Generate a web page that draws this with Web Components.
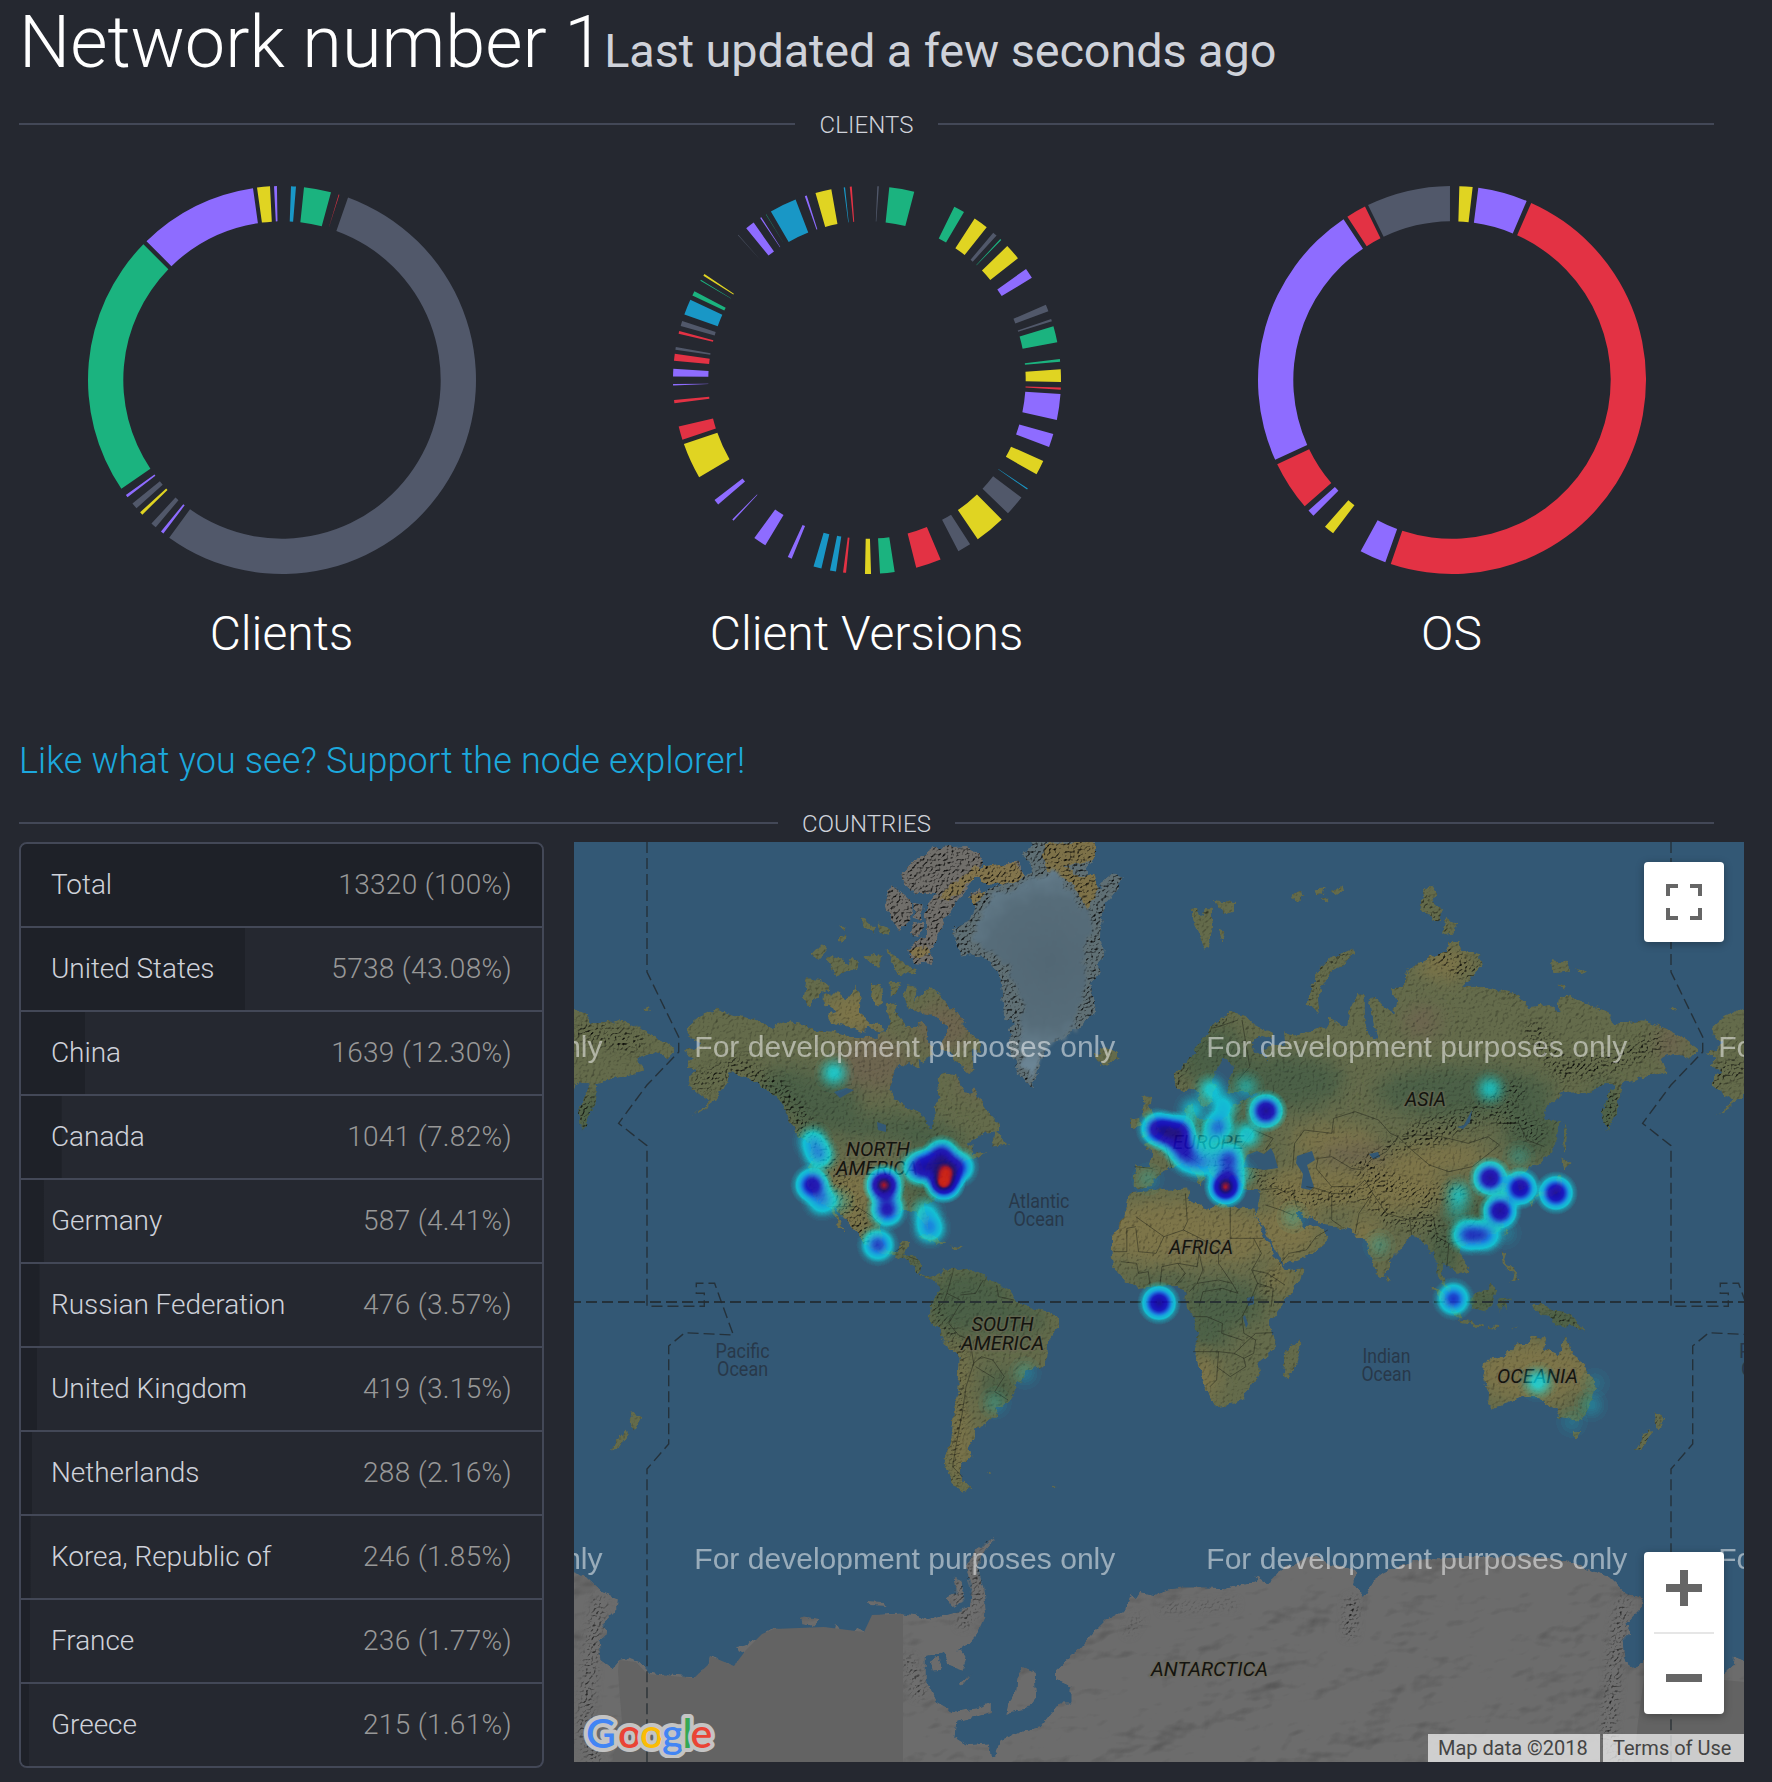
<!DOCTYPE html>
<html lang="en">
<head>
<meta charset="utf-8">
<title>Network number 1</title>
<style>
  body { margin: 0; background: #252830; color: #cfd2da; font-family: Roboto, "Liberation Sans", sans-serif; font-weight: 300; overflow: hidden; }
</style>
</head>
<body>
<explorer-page>
  <page-title slot="title" updated="Last updated a few seconds ago">Network number 1</page-title>
  <section-divider slot="clients">CLIENTS</section-divider>
  <donut-chart slot="charts" kind="clients">Clients</donut-chart>
  <donut-chart slot="charts" kind="versions">Client Versions</donut-chart>
  <donut-chart slot="charts" kind="os">OS</donut-chart>
  <support-link slot="support">Like what you see? Support the node explorer!</support-link>
  <section-divider slot="countries">COUNTRIES</section-divider>
  <country-list slot="list">
    <country-row share="100" value="13320 (100%)">Total</country-row>
    <country-row share="43.08" value="5738 (43.08%)">United States</country-row>
    <country-row share="12.30" value="1639 (12.30%)">China</country-row>
    <country-row share="7.82" value="1041 (7.82%)">Canada</country-row>
    <country-row share="4.41" value="587 (4.41%)">Germany</country-row>
    <country-row share="3.57" value="476 (3.57%)">Russian Federation</country-row>
    <country-row share="3.15" value="419 (3.15%)">United Kingdom</country-row>
    <country-row share="2.16" value="288 (2.16%)">Netherlands</country-row>
    <country-row share="1.85" value="246 (1.85%)">Korea, Republic of</country-row>
    <country-row share="1.77" value="236 (1.77%)">France</country-row>
    <country-row share="1.61" value="215 (1.61%)">Greece</country-row>
  </country-list>
  <node-map slot="map"></node-map>
</explorer-page>

<template id="map-template">
<style>
  :host { display: block; position: relative; width: 1170px; height: 920px; overflow: hidden; background: #335875; }
  svg.world { display: block; }
  .land-label { font: italic 400 20px Roboto, sans-serif; fill: #14140f; text-anchor: middle; stroke: rgba(110,105,85,.5); stroke-width: 3px; paint-order: stroke; stroke-linejoin: round; }
  .sea-label { font: 400 19.5px Roboto, sans-serif; fill: #28384a; text-anchor: middle; }
  .edge-label { font: 400 19.5px Roboto, sans-serif; fill: #28384a; }
  .dev { font: 400 30px "Liberation Sans", Arial, sans-serif; fill: #fff; fill-opacity: .5; }
  .controls { position: absolute; right: 20px; top: 20px; bottom: 48px; display: flex; flex-direction: column; justify-content: space-between; }
  .box { background: #fff; border-radius: 4px; width: 80px; box-shadow: 0 2px 8px rgba(0,0,0,.3); display: flex; flex-direction: column; align-items: center; }
  .box svg { display: block; }
  .box hr { width: 60px; height: 2px; border: 0; margin: 0; background: #e6e6e6; }
  .legal { position: absolute; right: 0; bottom: 0; display: flex; gap: 3px; font: 400 20px/28px Roboto, sans-serif; color: #444; }
  .legal span { box-sizing: border-box; background: rgba(245,245,245,.72); padding-left: 10px; white-space: nowrap; }
  .legal span:first-child { width: 172px; }
  .legal span:last-child { width: 141px; }
  .logo { position: absolute; left: 8px; bottom: 4px; }
  .logo text { font: 600 41px Lato, "Open Sans", sans-serif; }
</style>
<svg class="world" width="1170" height="920" viewBox="0 0 1170 920">
  <defs>
    <filter id="plain" filterUnits="userSpaceOnUse" x="0" y="-20" width="1210" height="980" color-interpolation-filters="sRGB">
      <feTurbulence type="fractalNoise" baseFrequency=".11" numOctaves="4" seed="4" result="n"/>
      <feDisplacementMap in="SourceGraphic" in2="n" scale="8" xChannelSelector="R" yChannelSelector="G" result="d"/>
      <feTurbulence type="fractalNoise" baseFrequency=".3" numOctaves="3" seed="9" result="h"/>
      <feDiffuseLighting in="h" surfaceScale=".8" diffuseConstant="1.34" lighting-color="#fff" result="l"><feDistantLight azimuth="225" elevation="50"/></feDiffuseLighting>
      <feComposite in="d" in2="l" operator="arithmetic" k1="1" result="m"/>
      <feComposite in="m" in2="d" operator="in"/>
    </filter>
    <filter id="rough" filterUnits="userSpaceOnUse" x="0" y="-20" width="1210" height="980" color-interpolation-filters="sRGB">
      <feTurbulence type="fractalNoise" baseFrequency=".11" numOctaves="4" seed="4" result="n"/>
      <feDisplacementMap in="SourceGraphic" in2="n" scale="8" xChannelSelector="R" yChannelSelector="G" result="d"/>
      <feTurbulence type="fractalNoise" baseFrequency=".38" numOctaves="2" seed="12" result="h"/>
      <feDiffuseLighting in="h" surfaceScale="2.6" diffuseConstant="1.5" lighting-color="#fff" result="l"><feDistantLight azimuth="225" elevation="50"/></feDiffuseLighting>
      <feComposite in="d" in2="l" operator="arithmetic" k1="1" result="m"/>
      <feComposite in="m" in2="d" operator="in"/>
    </filter>
    <filter id="ice" filterUnits="userSpaceOnUse" x="0" y="-20" width="1210" height="980" color-interpolation-filters="sRGB">
      <feTurbulence type="fractalNoise" baseFrequency=".11" numOctaves="4" seed="7" result="n"/>
      <feDisplacementMap in="SourceGraphic" in2="n" scale="6" xChannelSelector="R" yChannelSelector="G" result="d"/>
      <feTurbulence type="fractalNoise" baseFrequency=".012 .02" numOctaves="4" seed="3" result="h"/>
      <feDiffuseLighting in="h" surfaceScale="3.4" diffuseConstant="1.34" lighting-color="#fff" result="l"><feDistantLight azimuth="225" elevation="50"/></feDiffuseLighting>
      <feComposite in="d" in2="l" operator="arithmetic" k1="1" result="m"/>
      <feComposite in="m" in2="d" operator="in"/>
    </filter>
    <filter id="frost" x="-10%" y="-10%" width="120%" height="120%" color-interpolation-filters="sRGB">
      <feTurbulence type="fractalNoise" baseFrequency=".09" numOctaves="3" seed="7" result="n"/>
      <feDisplacementMap in="SourceGraphic" in2="n" scale="16" xChannelSelector="R" yChannelSelector="G"/>
      <feGaussianBlur stdDeviation="1.6"/>
    </filter>
    <filter id="soft" x="-50%" y="-50%" width="200%" height="200%"><feGaussianBlur stdDeviation="9"/></filter>
    <filter id="soft2" x="-50%" y="-50%" width="200%" height="200%"><feGaussianBlur stdDeviation="4"/></filter>
    <filter id="heat" filterUnits="userSpaceOnUse" x="0" y="0" width="1170" height="920" color-interpolation-filters="sRGB">
      <feColorMatrix values="0 0 0 1 0  0 0 0 1 0  0 0 0 1 0  0 0 0 1 0"/>
      <feComponentTransfer>
        <feFuncR type="table" tableValues="0 .02 .06 .08 .08 .08 .08 .08 .08 .08 .3 .7 .9 .95"/>
        <feFuncG type="table" tableValues="1 .95 .75 .5 .25 .05 .02 0 0 0 0 .02 .08 .1"/>
        <feFuncB type="table" tableValues="1 1 1 1 .9 .82 .8 .75 .62 .5 .36 .15 .05 .05"/>
        <feFuncA type="table" tableValues="0 .68 .74 .76 .78 .8 .8 .8 .8 .8 .8 .8 .8 .8"/>
      </feComponentTransfer>
    </filter>
    <radialGradient id="spot">
      <stop offset="0" stop-color="#fff" stop-opacity="1"/><stop offset=".2" stop-color="#fff" stop-opacity=".86"/>
      <stop offset=".4" stop-color="#fff" stop-opacity=".54"/><stop offset=".6" stop-color="#fff" stop-opacity=".24"/>
      <stop offset=".8" stop-color="#fff" stop-opacity=".06"/><stop offset="1" stop-color="#fff" stop-opacity="0"/>
    </radialGradient>

    <g id="america">
      <g transform="translate(-4 -2) scale(.38265 .33333)">
        <path d="M305 565 340 528 378 508 420 525 480 540 530 562 560 545 600 550 640 570 690 575 740 590 800 590 830 560 850 520 880 560 905 560 915 540 930 560 935 600 950 640 925 665 905 655 880 665 855 690 836 740 850 775 880 800 915 815 930 850 945 872 955 840 950 800 965 770 960 715 975 700 1010 705 1025 745 1040 765 1055 742 1070 770 1090 815 1120 850 1125 872 1080 880 1040 905 1058 915 1050 945 1070 945 1030 965 1015 990 1010 1005 980 1035 970 1055 945 1085 925 1100 938 1140 935 1162 920 1150 905 1115 870 1110 860 1120 830 1130 812 1155 815 1200 830 1230 850 1235 862 1205 888 1205 882 1235 875 1250 905 1250 918 1275 915 1300 940 1310 965 1305 965 1322 930 1315 905 1295 885 1265 850 1250 815 1240 770 1215 755 1180 730 1150 700 1110 690 1105 705 1140 722 1178 700 1155 685 1120 670 1100 640 1075 620 1040 620 1000 632 960 630 920 600 885 575 850 560 800 540 770 500 745 480 720 450 705 420 700 400 745 385 775 350 805 318 828 345 800 365 780 340 765 310 735 315 705 330 690 305 680 320 655 295 635 325 625 340 610 310 590Z"/>
        <path d="M615 415 650 415 680 440 650 470 625 505 608 470ZM665 460 700 460 725 480 745 435 760 470 758 520 790 550 770 578 725 562 680 547 670 525 700 515 665 490ZM785 435 815 435 815 490 800 500 782 465ZM835 425 865 425 855 465 835 470ZM830 480 850 500 850 560 830 530ZM880 435 905 440 900 480 940 440 970 470 1005 510 1035 560 1070 605 1075 640 1050 630 1055 690 1040 700 1010 670 990 640 965 620 985 590 985 560 950 530 915 520 880 500 870 465ZM880 640 910 650 915 685 885 670ZM1110 870 1125 890 1145 915 1100 920ZM1035 950 1090 935 1060 960ZM905 1185 940 1185 985 1208 960 1212 920 1195ZM990 1213 1025 1218 1010 1230ZM1370 640 1395 625 1430 630 1437 655 1400 680 1380 665ZM630 345 660 310 675 325 650 360ZM668 355 690 345 730 370 740 345 755 385 700 408 680 388ZM700 288 722 286 716 308 700 304ZM705 258 724 256 718 270ZM758 232 775 235 800 265 795 280 765 262ZM768 350 790 338 812 345 812 385 795 380ZM805 250 830 260 832 285 812 280ZM822 330 855 350 875 378 905 382 908 402 865 405 845 370ZM193 506 210 498 218 510ZM780 545 820 560 815 575 790 570Z"/>
      </g>
      <path transform="translate(-4 458) scale(.38265 .33333)" d="M960 -60 975 -90 1015 -97 1050 -88 1090 -70 1120 -45 1150 -30 1170 5 1200 20 1245 30 1278 55 1278 80 1250 120 1248 170 1235 200 1190 215 1175 250 1150 300 1130 322 1108 320 1115 345 1090 370 1060 385 1058 410 1040 435 1050 468 1025 500 1025 535 1052 567 1025 575 1000 550 985 520 978 480 990 440 1000 380 1003 330 1015 260 1018 170 990 140 965 100 938 50 940 20 945 0 965 -25ZM1088 520 1104 518 1098 526ZM1260 556 1270 560 1266 566Z"/>
    </g>
    <g id="eurasia" transform="translate(586 -2) scale(.39031 .33333)">
      <path fill-rule="nonzero" d="M55 755 38 730 35 700 70 670 95 620 130 560 180 515 220 525 240 550 290 580 290 600 250 590 235 600 245 640 272 655 262 630 290 615 322 610 320 575 335 590 365 580 400 570 435 555 430 530 470 560 480 555 485 510 505 462 525 465 525 520 530 560 542 590 560 600 548 560 540 500 545 470 560 475 570 500 600 520 605 480 590 445 625 440 625 405 650 375 690 350 735 335 740 305 765 305 770 330 820 345 825 380 800 410 775 440 830 440 870 450 920 465 945 500 1000 495 1020 510 1025 470 1060 470 1090 490 1150 515 1165 550 1200 548 1240 540 1290 560 1340 595 1380 630 1360 655 1320 640 1285 655 1300 695 1230 715 1185 730 1175 790 1145 875 1132 820 1145 770 1165 730 1140 730 1110 755 1030 760 990 805 985 835 1020 850 1018 900 1000 940 970 978 945 985 925 1005 948 1040 922 1052 905 1015 890 1005 865 1010 862 1030 895 1030 880 1050 895 1080 895 1130 870 1170 840 1195 800 1215 770 1215 765 1240 790 1275 790 1295 765 1305 750 1285 735 1280 725 1270 720 1300 735 1335 750 1362 738 1358 715 1310 700 1240 680 1225 665 1190 640 1195 620 1225 590 1260 575 1312 560 1310 530 1225 525 1195 505 1195 490 1170 460 1160 410 1155 395 1140 355 1115 348 1122 375 1160 405 1157 432 1190 405 1225 365 1255 315 1275 290 1220 260 1160 243 1130 250 1100 258 1050 215 1050 197 1010 180 1008 168 1052 150 1030 125 985 95 975 118 1010 105 1040 85 1000 60 970 30 985 0 1000 -25 1040 -60 1050 -68 1035 -66 978 -25 978 -18 940 -45 915 -10 900 20 870 60 850 70 830 65 795 85 790 90 840 150 840 175 830 180 800 200 790 230 770 260 765 225 760 178 760 172 730 188 680 165 650 150 680 135 720 145 745 130 790 105 800 95 760 75 740Z"/>
      <path d="M-78 1058 0 1050 70 1045 75 1075 130 1110 145 1090 180 1100 240 1105 245 1135 270 1190 290 1240 320 1290 368 1285 360 1320 320 1385 285 1440 285 1470 297 1510 285 1540 250 1575 255 1600 235 1640 195 1690 140 1700 128 1670 105 1600 85 1535 100 1480 85 1430 65 1400 65 1355 30 1335 -20 1340 -55 1345 -90 1320 -120 1280 -125 1240 -118 1180 -95 1130 -85 1095ZM315 1605 320 1535 358 1495 360 1520 340 1600 325 1610Z"/>
      <path d="M-45 768-25 770-28 795-15 830 0 870-5 885-50 890-35 860-40 830ZM-75 835-50 830-48 860-75 868ZM78 210 98 204 105 235 112 205 132 202 140 262 118 334 98 280ZM140 180 190 185 190 215 160 225ZM150 265 168 275 160 308ZM495 325 498 345 440 395 415 440 405 480 410 520 378 495 385 440 410 385 430 360ZM680 150 695 132 710 160 700 190 722 210 722 245 690 225 665 205ZM735 230 762 250 755 275 725 285ZM1000 360 1050 365 1050 395 1005 400ZM1065 380 1095 395 1080 403ZM1020 430 1040 435 1035 450ZM1035 845 1043 880 1040 935 1033 930ZM1030 955 1055 970 1035 990ZM1025 1000 1030 1050 1000 1070 960 1070 980 1055 1010 1040ZM948 1075 963 1075 955 1100ZM885 1165 893 1170 885 1190ZM875 1230 890 1240 885 1265 910 1290 918 1320 900 1330 905 1300 880 1270ZM795 1370 830 1350 850 1330 862 1345 850 1400 835 1415 800 1405ZM695 1340 720 1355 770 1420 775 1440 750 1425ZM770 1440 830 1455 825 1464 775 1450ZM868 1375 905 1372 880 1385 890 1415 875 1400 870 1425ZM955 1395 985 1395 1000 1410 1040 1415 1065 1430 1090 1475 1050 1455 1015 1460 1000 1430 965 1415ZM840 1458 870 1460 868 1468 842 1464ZM898 1468 922 1458 905 1472ZM580 1305 592 1320 584 1330ZM828 1580 835 1560 885 1545 915 1510 945 1508 950 1490 990 1492 985 1525 1015 1545 1030 1530 1035 1483 1050 1515 1060 1550 1090 1575 1110 1615 1115 1650 1095 1720 1065 1742 1025 1735 1015 1710 990 1695 960 1672 930 1672 895 1690 855 1705 838 1695 840 1660 828 1620ZM1055 1770 1078 1770 1070 1792 1060 1790ZM1265 1713 1280 1725 1295 1735 1278 1772 1268 1755ZM1253 1770 1262 1780 1235 1825 1213 1832 1225 1810ZM335 165 362 150 365 165 345 188ZM398 148 425 145 420 162 402 160ZM440 155 460 145 468 135 472 158 452 165ZM408 175 430 172 424 188Z"/>
    </g>
    <path id="greenland" transform="translate(-4 -2) scale(.38265 .33333)" d="M1060 195 1095 145 1160 125 1210 95 1185 40 1220 0 1370 0 1370 60 1350 85 1365 130 1390 150 1385 130 1420 100 1448 110 1430 150 1400 190 1390 240 1385 290 1395 330 1380 400 1360 430 1375 500 1360 540 1320 570 1290 590 1240 625 1225 680 1212 742 1180 720 1165 670 1145 620 1150 570 1165 545 1135 540 1130 480 1125 420 1100 370 1060 345 1025 350 1010 310 1000 265 1045 240Z"/>
    <path id="arctic" transform="translate(-4 -2) scale(.38265 .33333)" d="M865 100 900 60 950 25 1030 18 1070 45 1080 70 1050 100 1050 130 1010 190 975 250 950 320 935 352 880 340 905 300 930 290 930 200 960 160 900 160 870 130ZM840 135 870 165 895 190 890 240 860 272 835 230 825 180ZM1085 90 1130 70 1170 60 1190 110 1130 130 1090 120ZM1040 165 1070 145 1090 190 1060 200ZM885 345 950 345 940 375 900 370ZM898 185 922 190 920 240 895 230ZM900 245 922 250 915 290 890 280Z"/>
    <path id="antarctica" transform="translate(-4 458) scale(.38265 .33333)" d="M196 1115 250 1125 325 1132 362 1095 365 1068 430 1098 455 1060 430 1045 460 1035 500 1005 530 985 600 990 660 980 690 990 692 968 705 995 730 1000 745 985 785 1004 793 945 870 940 900 945 935 960 1000 940 1045 920 1050 870 1035 800 1060 750 1113 712 1085 750 1062 800 1080 860 1088 940 1065 1000 1030 1045 980 1060 930 1072 930 1140 960 1210 1000 1235 1060 1225 1100 1208 1100 1240 1010 1265 1005 1310 1040 1335 1095 1330 1100 1372 1110 1370 1125 1320 1190 1290 1230 1280 1280 1210 1310 1210 1310 1160 1270 1140 1270 1110 1330 1045 1365 1000 1400 960 1450 930 1465 880 1480 895 1490 875 1525 885 1565 868 1600 862 1664 862 1715 865 1797 845 1790 825 1828 855 1843 820 1889 790 1950 765 1981 790 2057 810 2047 850 2072 890 2098 840 2128 815 2205 780 2307 770 2409 770 2511 765 2613 785 2715 830 2756 875 2804 895 2802 920 2761 970 2774 1000 2751 1020 2756 1080 2786 1105 2804 1080 2827 1075 2858 1085 2882 1115 2882 1450 196 1450ZM780 903 820 905 825 918 785 916ZM1005 830 1020 840 1030 900 1000 922 980 895 1010 880ZM940 1085 960 1070 975 1110 945 1112ZM975 1052 1020 1050 1037 1080 1030 1110 990 1095ZM1015 1155 1050 1122 1022 1160ZM1185 1100 1215 1115 1218 1190 1190 1230 1140 1242 1145 1210 1165 1180 1170 1120ZM600 950 650 960 635 978 610 973Z"/>

    <g id="land-shape">
      <use href="#america"/><use href="#america" x="1024"/>
      <use href="#eurasia"/><use href="#eurasia" x="-1024"/>
    </g>
    <mask id="land-mask" maskUnits="userSpaceOnUse" x="-20" y="-20" width="1230" height="980"><use href="#land-shape" fill="#fff"/></mask>

    <g id="terrain">
      <rect x="-20" y="-20" width="1230" height="980" fill="#646b4b"/>
      <g filter="url(#soft)">
        <g fill="#4b6047">
          <ellipse cx="215" cy="245" rx="30" ry="20"/><ellipse cx="250" cy="262" rx="36" ry="30"/><ellipse cx="310" cy="285" rx="60" ry="13"/><ellipse cx="360" cy="300" rx="34" ry="14"/>
          <ellipse cx="355" cy="345" rx="24" ry="22"/><ellipse cx="335" cy="425" rx="18" ry="10"/><ellipse cx="395" cy="460" rx="42" ry="34"/><ellipse cx="445" cy="478" rx="26" ry="18"/>
          <ellipse cx="640" cy="215" rx="34" ry="30"/><ellipse cx="710" cy="240" rx="60" ry="28"/><ellipse cx="650" cy="285" rx="40" ry="16"/><ellipse cx="890" cy="250" rx="90" ry="26"/>
          <ellipse cx="960" cy="290" rx="30" ry="30"/><ellipse cx="1030" cy="270" rx="14" ry="30"/><ellipse cx="900" cy="375" rx="32" ry="22"/><ellipse cx="870" cy="410" rx="18" ry="26"/>
          <ellipse cx="650" cy="462" rx="40" ry="24"/><ellipse cx="590" cy="440" rx="32" ry="7"/><ellipse cx="910" cy="460" rx="40" ry="16"/><ellipse cx="985" cy="478" rx="30" ry="14"/><ellipse cx="630" cy="495" rx="26" ry="14"/>
          <ellipse cx="425" cy="545" rx="20" ry="16"/><ellipse cx="1012" cy="560" rx="8" ry="24"/><ellipse cx="20" cy="285" rx="20" ry="34"/>
        </g>
        <g fill="#7d744a">
          <ellipse cx="595" cy="390" rx="76" ry="32"/><ellipse cx="660" cy="395" rx="30" ry="28"/><ellipse cx="712" cy="390" rx="34" ry="26"/><ellipse cx="705" cy="435" rx="14" ry="14"/>
          <ellipse cx="745" cy="345" rx="56" ry="22"/><ellipse cx="820" cy="345" rx="50" ry="26"/><ellipse cx="865" cy="315" rx="50" ry="14"/><ellipse cx="760" cy="300" rx="44" ry="16"/><ellipse cx="790" cy="392" rx="18" ry="16"/>
          <ellipse cx="628" cy="535" rx="16" ry="26"/><ellipse cx="960" cy="530" rx="60" ry="30"/><ellipse cx="278" cy="345" rx="24" ry="22"/><ellipse cx="280" cy="375" rx="16" ry="22"/><ellipse cx="386" cy="600" rx="12" ry="42"/><ellipse cx="388" cy="535" rx="6" ry="36"/>
          <ellipse cx="280" cy="170" rx="30" ry="20"/><ellipse cx="870" cy="122" rx="26" ry="16"/>
        </g>
        <g fill="#6d654f">
          <ellipse cx="300" cy="220" rx="34" ry="28"/><ellipse cx="370" cy="185" rx="30" ry="24"/><ellipse cx="848" cy="180" rx="18" ry="16"/><ellipse cx="400" cy="240" rx="16" ry="12"/><ellipse cx="780" cy="312" rx="36" ry="10"/><ellipse cx="1096" cy="200" rx="14" ry="18"/>
        </g>
      </g>
    </g>
    <mask id="peaks" maskUnits="userSpaceOnUse" x="-20" y="-20" width="1230" height="980">
      <g filter="url(#soft2)" stroke="#fff" fill="none" stroke-linecap="round">
        <path stroke-width="22" d="M130 240 165 225 200 245 228 275 240 300 262 330 275 365 290 395"/>
        <path stroke-width="9" d="M364 450 362 470 388 505 387 560 380 620 382 640M600 250 612 215 640 180 652 174M440 180 365 130M330 420 350 435"/>
        <path stroke-width="16" d="M675 330 700 345 730 358 790 350 815 375 850 385M785 325 830 300 870 295M850 370 870 400M630 315 650 325"/>
        <path stroke-width="22" d="M800 335 850 355 880 350M845 290 900 275 940 250M960 190 990 230 1040 220 1080 200M925 270 960 290M865 110 895 130M1035 250 1030 280M1040 60 1050 80"/>
        <path stroke-width="9" d="M735 160 745 125 775 108M620 70 640 65M845 50 870 90M975 470 1000 485M895 380 900 385M700 430 690 450M710 505 717 490M1085 565 1065 610M905 120 940 150"/>
        <path stroke-width="22" d="M12 190 60 200M12 280 10 260M1130 240 1165 225"/>
      </g>
    </mask>
    <radialGradient id="gl" gradientUnits="userSpaceOnUse" cx="475" cy="120" r="105"><stop offset="0" stop-color="#526774"/><stop offset=".6" stop-color="#566c79"/><stop offset="1" stop-color="#6b8595"/></radialGradient>
  </defs>

  <g filter="url(#plain)"><g mask="url(#land-mask)"><use href="#terrain"/></g></g>
  <g mask="url(#peaks)"><g filter="url(#rough)"><g mask="url(#land-mask)"><use href="#terrain"/></g></g></g>
  <g filter="url(#rough)"><use href="#arctic" fill="#706e6a"/><path d="M363 56 400 24 408 30 376 58ZM394 30 410 24 440 20 452 36 430 44 410 40ZM395 55 412 48 414 64 404 68ZM335 108 352 104 358 112 340 116Z" fill="#82744c"/></g>
  <g filter="url(#rough)"><use href="#greenland" fill="#5f6f74"/><path d="M470 2 520 0 520 18 490 24 505 36 520 30 524 50 512 66 498 40 470 25Z" fill="#7d7148"/></g>
  <path filter="url(#frost)" fill="url(#gl)" d="M404 88 408 70 418 54 440 48 466 34 478 28 492 44 507 60 516 78 510 120 514 138 502 168 502 186 482 200 468 212 460 236 450 226 446 190 448 160 440 135 430 118 412 108 396 98Z"/>
  <g fill="#335875">
    <path d="M669 325 673 313 683 309 690 312 697 306 700 312 704 326 690 328 680 326ZM723 314 738 309 741 318 733 323 740 345 736 348 727 346 729 332 722 321ZM795 312 804 310 806 315 799 317ZM883 285 890 283 898 268 896 280 889 287ZM260 250 272 246 280 248 266 256ZM303 280 312 283 312 290 304 288ZM342 315 352 308 362 312 355 318 350 330 346 318ZM358 322 374 318 372 322ZM673 456 680 454 680 462 674 464ZM669 475 671 473 674 482 672 486Z"/>
  </g>
  <g transform="translate(586 -2) scale(.39031 .33333)" fill="none" stroke="#1e2018" stroke-opacity=".6" stroke-width="2.2">
    <path d="M-118 1235H-85V1165L-62 1160M-62 1130 10 1190 60 1170 70 1145 65 1060M180 1100V1195H265M60 1170 95 1190 150 1225M-62 1165-55 1235-10 1240 10 1190M-100 1265-60 1270-55 1300-30 1295-25 1340M0 1335 5 1280 45 1270 95 1280 100 1240 95 1190M45 1270 65 1300 40 1335M100 1240 110 1290 95 1330 75 1355M95 1330 150 1320 185 1330 200 1360 160 1345 110 1355 100 1400M150 1225V1270L185 1330M240 1195 260 1240 235 1290 250 1330 230 1385 210 1430M235 1290 275 1300 320 1335M250 1330 290 1345 285 1400M85 1430H120L160 1450 158 1480 210 1500M85 1535H150L190 1540 245 1480 290 1478M150 1535 145 1620 128 1640M145 1580 180 1610 220 1580 215 1555 190 1540M210 1430 215 1480 245 1500 240 1540 215 1555M230 1380H275"/>
    <path d="M258 1050 300 1045 325 1060 340 1050 350 1100M270 1095 310 1110 340 1125M430 1170 400 1190M305 1275 330 1240 375 1230 400 1190M375 1040 400 1045 440 1060 440 1140 465 1160M340 985 345 910 370 870 440 880 445 835 500 815 560 840 590 880 610 890 580 935 540 960 520 990 490 985 440 950 405 955 400 985 440 1040 500 1040M440 1060 490 1060 525 1020 545 1060 510 1120 500 1180M620 890 660 885 720 890 790 910 840 890 870 915 800 980 740 995 690 975 640 925 610 890M545 1060 580 1120 640 1140 700 1130M640 1140 645 1185M700 1130 710 1190 740 1210 780 1200M740 1210 735 1280M870 850 920 850 940 900 985 920M210 540 230 680 200 720M130 565 150 560 200 540M150 840 160 900 210 920 240 870 290 895 270 930M60 850 100 900 60 940 100 970M10 900 30 985M-65 980-20 985"/>
  </g>
  <g transform="translate(-4 458) scale(.38265 .33333)" fill="none" stroke="#1e2018" stroke-opacity=".6" stroke-width="2.2">
    <path d="M1000-80 985-20 1020 0M1020-15 1060-20 1080-60M1115-45 1120-10 1160 0M1018 15 990 70 1015 105 1045 120 1055 190 1075 170 1105 180 1135 230 1110 275 1145 300M1055 190 1035 260 1025 340 1010 430 1000 500 1025 530M1060 200 1110 235M945 35 975 10 985-20M675-280 750-280 790-250 812-225M850-145 870-160M885-130 910-120"/>
  </g>

  <g filter="url(#ice)"><use href="#antarctica" fill="#6c6c6c"/><use href="#antarctica" x="-1024" fill="#6c6c6c"/><use href="#antarctica" x="1024" fill="#6c6c6c"/></g>
  <g mask="url(#pole-peaks)"><g filter="url(#rough)"><use href="#antarctica" fill="#6f6f6f"/><use href="#antarctica" x="-1024" fill="#6f6f6f"/></g></g>
  <path fill="#636363" d="M73 832 120 836 135 822 136 814 160 824 172 808 188 792 200 787 250 785 290 790 298 773 329 772V920H38L48 880 44 830 45 818 62 820Z"/>
  <path fill="#636363" d="M1064 880 1070 836 1084 819 1092 819 1110 834 1170 840V920H1060Z"/>
  <mask id="pole-peaks" maskUnits="userSpaceOnUse" x="-20" y="-20" width="1230" height="980">
    <g filter="url(#soft2)" stroke="#fff" fill="none" stroke-linecap="round" stroke-width="10"><path d="M390 780 405 755 404 738 418 700M335 820 345 850M1050 760 1042 800 1038 850 1034 890 1044 920M26 760 18 800 14 850 10 890 20 920M778 760 776 790M395 700 385 760"/><path stroke-width="5" stroke-opacity=".6" d="M590 766 660 762M565 775 555 790"/></g>
  </mask>

  <g fill="none" stroke="#222a30" stroke-opacity=".85">
    <path d="M0 460H1170" stroke-width="2" stroke-dasharray="11 5" stroke-dashoffset="4"/>
    <g id="dateline" stroke-width="1.4" stroke-dasharray="11 5">
      <path d="M73 0V130L104.700 195V210L73 243 44.600 281.300 73 303.700V464.300H130.300V451.300H122.300V441.300H140.600L159.400 493 110.800 490.700 94.700 504V602L73 627V920"/>
    </g>
    <use href="#dateline" x="1024"/>
  </g>

  <g class="labels"></g>
  <g class="heat" filter="url(#heat)"></g>
  <g class="notes"></g>
</svg>
<div class="controls">
  <div class="box">
    <svg width="80" height="80" viewBox="0 0 80 80" fill="none" stroke="#666" stroke-width="4"><path d="M24 34V24H34M46 24H56V34M56 46V56H46M34 56H24V46"/></svg>
  </div>
  <div class="box">
    <svg width="80" height="80" viewBox="0 0 80 80" fill="#666"><path d="M22 32H36V18H44V32H58V40H44V54H36V40H22Z"/></svg>
    <hr>
    <svg width="80" height="80" viewBox="0 0 80 80" fill="#666"><rect x="22" y="40" width="36" height="8"/></svg>
  </div>
</div>
<svg class="logo" width="140" height="54" viewBox="0 0 140 54">
  <text y="44" stroke="#c4c4c4" stroke-width="8" stroke-linejoin="round" paint-order="stroke" aria-hidden="true"><tspan fill="#4285f4" x="4">G</tspan><tspan fill="#ea4335" x="36">o</tspan><tspan fill="#fbbc05" x="58">o</tspan><tspan fill="#4285f4" x="80">g</tspan><tspan fill="#34a853" x="100.500">l</tspan><tspan fill="#ea4335" x="108.500">e</tspan></text>
</svg>
<div class="legal"><span>Map data ©2018</span><span>Terms of Use</span></div>
</template>

<script>
const define = (name, html, setup) => customElements.define(name, class extends HTMLElement {
  connectedCallback() {
    if (this.shadowRoot) return;
    const root = this.attachShadow({ mode: 'open' });
    root.innerHTML = html;
    if (setup) setup(root, this);
  }
});

define('explorer-page', `
  <style>
    :host { display: block; box-sizing: border-box; width: 1772px; height: 1782px; overflow: hidden; padding-left: 19px; }
    main { width: 1695px; display: flex; flex-direction: column; }
    .charts { display: flex; margin: 39px -30px 80px; }
    .where { display: flex; margin: 2px -30px 0; align-items: flex-start; }
    .list { flex: none; box-sizing: border-box; width: 585px; padding: 0 30px; }
  </style>
  <main>
    <slot name="title"></slot>
    <slot name="clients"></slot>
    <div class="charts"><slot name="charts"></slot></div>
    <slot name="support"></slot>
    <slot name="countries"></slot>
    <div class="where"><div class="list"><slot name="list"></slot></div><slot name="map"></slot></div>
  </main>`);

define('page-title', `
  <style>
    :host { display: block; height: 111px; }
    h1 { margin: 0; font-size: 72px; font-weight: 300; line-height: 86px; color: #fff; white-space: nowrap; }
    small { font-size: 65%; font-weight: 400; letter-spacing: -.09px; color: #cfd2da; }
  </style>
  <h1><slot></slot><small></small></h1>`,
  (root, el) => { root.querySelector('small').textContent = el.getAttribute('updated'); });

define('section-divider', `
  <style>
    :host { display: flex; align-items: center; gap: 24px; height: 30px; font-size: 24px; line-height: 29px; letter-spacing: .1px; color: #cfd2da; }
    i { flex: 1; height: 2px; background: #434857; margin-bottom: 4px; }
    span { margin-bottom: 1px; }
  </style>
  <i></i><span><slot></slot></span><i></i>`);

define('support-link', `
  <style>
    :host { display: block; height: 69px; }
    a { font-size: 36px; line-height: 40px; letter-spacing: .13px; color: #1ca8dd; }
  </style>
  <a><slot></slot></a>`);

const PAINT = { n: '#51586a', g: '#1bb37f', p: '#8e6cff', y: '#e0d422', r: '#e33244', b: '#1997c6' };

/* Each slice: colour key, start and end in degrees clockwise from the top. */
const SLICES = {
  clients: 'b 2.66 4.14,g 6.51 14.63,r 16.98 17.2,n 19.9 215.55,p 217.7 218.6,n 220.6 222.3,y 226.05 227,n 228.6 230.45,p 232.8 233.6,g 235.9 314.4,p 315.7 351.4,y 352.6 356.45,p 357.64 358.5',
  versions: 'n 3.05 3.5,g 6.6 14.1,g 26.75 30,y 33.7 38.1,n 40.6 41.9,g 43.4 43.8,y 46.3 51.1,p 55.06 58.2,n 67.2 69.25,n 71.65 72.4,g 73.95 78.8,g 83.8 84.6,y 86.85 90.6,r 92.2 92.85,p 94.15 101.9,p 106.2 110.2,y 114.7 119.1,b 124 124.4,n 127.25 133.4,y 136 145.2,n 147.9 151.9,r 157.7 165.3,g 171.8 176.15,y 178.8 180.6,r 186.2 187.1,b 189.2 191,b 193.6 196,p 202.85 204.1,p 211.6 215.5,p 223.5 224,p 230.1 231.8,y 239.9 250.7,r 252.1 256.1,r 263.1 264.1,p 268.4 268.8,p 271 273.35,r 275.7 277.8,n 279 279.8,r 283.8 284.6,n 286.2 287.7,b 289.7 294.4,g 295.8 297.2,g 300.8 301.1,y 302.5 303.1,n 318.3 318.45,p 321.5 324.25,p 326.6 327,g 328.6 328.7,b 330.3 338.4,p 341.3 341.9,y 344.6 349.4,b 353.1 353.5,r 354.9 355.5',
  os: 'y 2.17 6.12,p 7.8 22.64,r 24.1 198.4,p 200.1 208.1,y 217.8 220.9,p 225.6 227.7,r 229.4 244.3,p 245.7 326,r 327.35 333.35,n 334.35 359.4'
};

define('donut-chart', `
  <style>
    :host { display: flex; flex-direction: column; align-items: center; width: 585px; }
    svg { display: block; }
    div { margin-top: 27px; font-size: 48px; line-height: 54px; color: #fff; }
  </style>
  <svg width="400" height="400" viewBox="-200 -200 400 400"></svg>
  <div><slot></slot></div>`,
  (root, el) => {
    const R = 194, r = 158.7, lean = 0.13;
    const at = (rad, deg) => {
      const t = deg * Math.PI / 180;
      return (rad * Math.sin(t)).toFixed(2) + ' ' + (-rad * Math.cos(t)).toFixed(2);
    };
    root.querySelector('svg').innerHTML = SLICES[el.getAttribute('kind')].split(',').map(s => {
      const [key, a0, b0] = s.split(' '), a = +a0, b = +b0;
      let c = a + lean, d = b - lean;
      if (c > d) c = d = (a + b) / 2;
      const big = b - a > 180 ? 1 : 0;
      return `<path fill="${PAINT[key]}" d="M${at(R, a)}A${R} ${R} 0 ${big} 1 ${at(R, b)}L${at(r, d)}A${r} ${r} 0 ${big} 0 ${at(r, c)}Z"/>`;
    }).join('');
  });

define('country-list', `
  <style>
    :host { display: flex; flex-direction: column; gap: 2px; box-sizing: border-box; height: 926px; border: 2px solid #434857; border-radius: 8px; background: #434857; overflow: hidden; }
  </style>
  <slot></slot>`);

define('country-row', `
  <style>
    :host { display: flex; justify-content: space-between; align-items: center; box-sizing: border-box; height: 82px; padding: 0 30px 2px; font-size: 28px; color: #cfd2da;
      background: linear-gradient(#1e2128, #1e2128) 0 0 / var(--share) 100% no-repeat #252830; }
    span { letter-spacing: -.06px; }
    b { font-weight: 300; letter-spacing: .32px; color: #989898; }
  </style>
  <span><slot></slot></span><b></b>`,
  (root, el) => {
    root.querySelector('b').textContent = el.getAttribute('value');
    el.style.setProperty('--share', el.getAttribute('share') + '%');
  });

const LABELS = [
  ['land', 'NORTH', 304, 313.7, 64], ['land', 'AMERICA', 303, 332.7, 82],
  ['land', 'SOUTH', 428.6, 489.3, 62], ['land', 'AMERICA', 428.6, 508.3, 83],
  ['land', 'AFRICA', 627, 412, 64], ['land', 'ASIA', 851.6, 264, 41], ['land', 'EUROPE', 634, 307.3, 71],
  ['land', 'OCEANIA', 963.5, 541, 81], ['land', 'ANTARCTICA', 635.5, 834.3, 117],
  ['sea', 'Atlantic', 465, 365.7, 61], ['sea', 'Ocean', 465, 384, 51],
  ['sea', 'Pacific', 168.6, 516, 54], ['sea', 'Ocean', 168.6, 533.7, 51],
  ['sea', 'Indian', 812.4, 521.3, 48], ['sea', 'Ocean', 812.4, 539, 50]
];

/* x, y, weight */
const NODES = [
  [260,231,.08],[239,300,.14],[245,313,.18],[238,343,.5],[248,358,.2],[264,360,.03],[310,343,.86],[313,368,.4],[313,356,.12],[304,403,.32],
  [356,386,.2],[352,371,.1],[370,340,.99],[372,330,.88],[368,314,.5],[350,325,.46],[384,325,.36],[360,322,.3],[342,326,.16],[585,461,.62],
  [583,287,.42],[592,289,.46],[605,290,.5],[600,298,.22],[609,305,.3],[612,314,.2],[620,319,.14],[630,322,.12],[640,318,.08],
  [637,248,.09],[672,245,.045],[650,265,.1],[619,268,.07],[644,285,.24],[673,293,.1],[692,269,.6],[651.6,345,.86],[655,316,.28],[654,331,.22],[666,332,.05],[633,300,.07],
  [574,337,.02],[719,375,.02],[805,403,.02],[916,247,.07],[916,336,.58],[946,346,.58],[982,351,.6],[926,369,.58],[885,352,.06],[883,368,.03],
  [893,393,.26],[901,393,.12],[911,393,.24],[931,391,.02],[945,315,.02],[879.5,457,.34],[964,540,.09],[1017,563,.025],[998,580,.015],[1021,541,.012],[451,531,.02],[421,561,.02]
];

class NodeMap extends HTMLElement {
  connectedCallback() {
    if (this.shadowRoot) return;
    const root = this.attachShadow({ mode: 'open' });
    root.append(document.getElementById('map-template').content.cloneNode(true));
    root.querySelector('.labels').innerHTML = LABELS.map(([kind, text, x, y, w]) =>
      `<text class="${kind}-label" x="${x}" y="${y}" textLength="${w}" lengthAdjust="spacingAndGlyphs">${text}</text>`).join('')
      + '<text class="edge-label" x="1165" y="516">P</text><text class="edge-label" x="1167" y="533.7">O</text>';
    root.querySelector('.heat').innerHTML = NODES.map(([x, y, w]) =>
      `<circle cx="${x}" cy="${y}" r="22" fill="url(#spot)" opacity="${w}"/>`).join('');
    root.querySelector('.notes').innerHTML = [214.7, 726.7].map(y =>
      `<text class="dev" x="28.500" y="${y}" text-anchor="end">nly</text>` + [120.3, 632.3].map(x =>
      `<text class="dev" x="${x}" y="${y}" textLength="421" lengthAdjust="spacingAndGlyphs">For development purposes only</text>`).join('') +
      `<text class="dev" x="1144.300" y="${y}">Fo</text>`).join('');
  }
}
customElements.define('node-map', NodeMap);
</script>
</body>
</html>
